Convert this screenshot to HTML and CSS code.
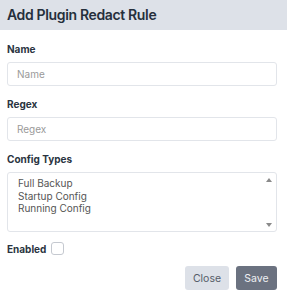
FILE: index.html
```
<!DOCTYPE html>
<html>
<head>
<meta charset="utf-8">
<link rel="stylesheet" href="styles.css">
</head>
<body>
<div class="modal">
  <div class="header">Add Plugin Redact Rule</div>
  <div class="content">
    <div class="field">
      <label class="label">Name</label>
      <input class="input" placeholder="Name">
    </div>
    <div class="field">
      <label class="label">Regex</label>
      <input class="input" placeholder="Regex">
    </div>
    <div class="field">
      <label class="label">Config Types</label>
      <div class="listbox">
        <div class="options">
          <div class="opt">Full Backup</div>
          <div class="opt">Startup Config</div>
          <div class="opt">Running Config</div>
        </div>
        <div class="scroll">
          <span class="arrow up"></span>
          <span class="arrow down"></span>
        </div>
      </div>
    </div>
    <div class="check-row">
      <span class="label inline">Enabled</span>
      <span class="checkbox"></span>
    </div>
    <div class="actions">
      <button class="btn close">Close</button>
      <button class="btn save">Save</button>
    </div>
  </div>
</div>
</body>
</html>
```
FILE: styles.css
```
* { box-sizing: border-box; }
body {
  margin: 0;
  font-family: Inter, "Liberation Sans", sans-serif;
  background: #fff;
}
.header {
  height: 30px;
  background: #dde1e8;
  color: #252f3c;
  font-weight: 600;
  font-size: 14px;
  letter-spacing: -0.35px;
  line-height: 30px;
  padding-left: 7px;
}
.content {
  padding: 13px 10px 0 7px;
}
.field {
  display: flex;
  flex-direction: column;
  margin-bottom: 12px;
}
.label {
  font-size: 10px;
  font-weight: 700;
  color: #2a3441;
  line-height: 12px;
  margin-bottom: 7px;
}
.label.inline { margin-bottom: 0; }
.input {
  height: 24px;
  border: 1px solid #e2e5ea;
  border-radius: 3px;
  padding: 0 9px;
  font-family: inherit;
  font-size: 10px;
  color: #555;
  outline: none;
}
.input::placeholder { color: #9a9a9a; }
.listbox {
  height: 60px;
  border: 1px solid #e2e5ea;
  border-radius: 3px;
  display: flex;
  justify-content: space-between;
}
.options {
  padding: 4px 0 0 10px;
}
.opt {
  font-size: 10px;
  line-height: 12.5px;
  color: #555;
}
.scroll {
  width: 10px;
  display: flex;
  flex-direction: column;
  justify-content: space-between;
  align-items: center;
  padding: 5px 0 4px;
  margin-right: 2px;
}
.arrow {
  width: 0;
  height: 0;
  border-left: 3.5px solid transparent;
  border-right: 3.5px solid transparent;
}
.arrow.up { border-bottom: 4px solid #8a8a8a; }
.arrow.down { border-top: 4px solid #8a8a8a; }
.check-row {
  display: flex;
  align-items: center;
  gap: 5px;
  margin-top: -2px;
}
.checkbox {
  width: 13px;
  height: 13px;
  border: 1px solid #c5c9d0;
  border-radius: 3px;
  background: #fff;
}
.actions {
  display: flex;
  justify-content: flex-end;
  gap: 7px;
  margin-top: 11px;
}
.btn {
  height: 24px;
  border: none;
  border-radius: 3px;
  font-family: inherit;
  font-size: 10.5px;
  padding: 0;
}
.btn.close { background: #dde1e8; color: #555d69; width: 44px; }
.btn.save { background: #6b7280; color: #eef0f3; width: 41px; }
```
